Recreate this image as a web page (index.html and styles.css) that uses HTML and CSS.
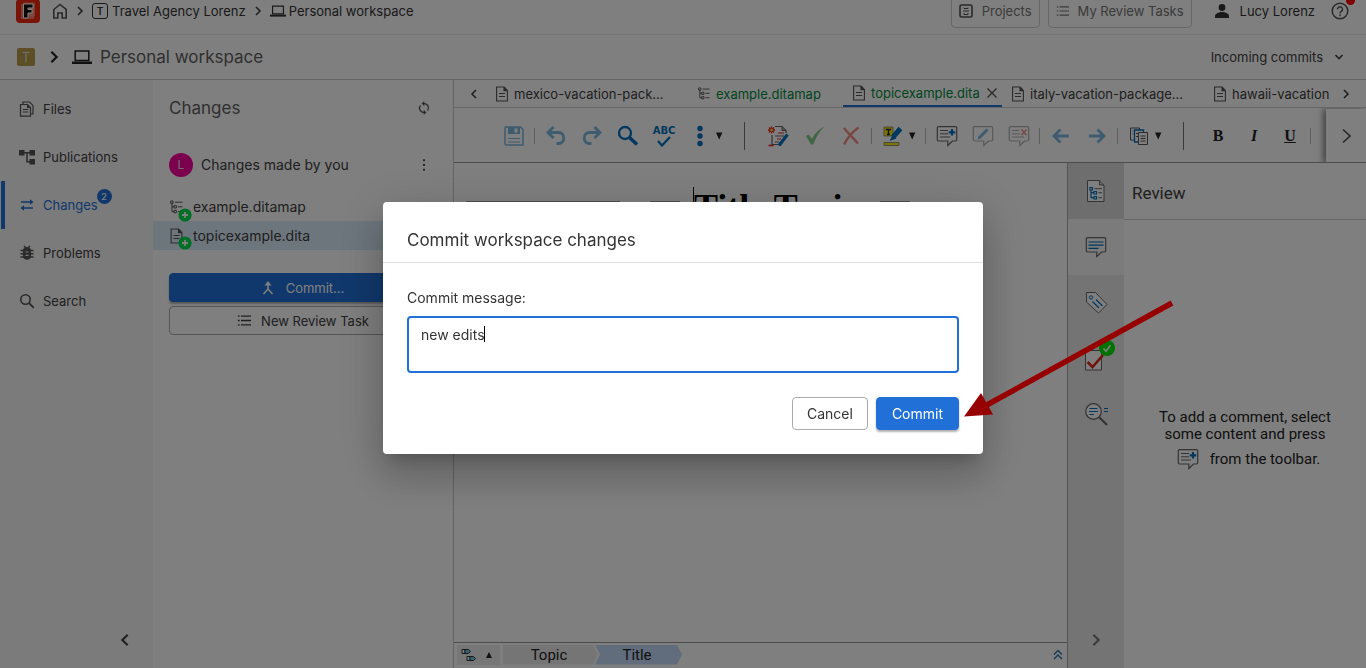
FILE: index.html
```html
<!DOCTYPE html>
<html lang="en">
<head>
<meta charset="utf-8">
<title>Personal workspace</title>
<link rel="stylesheet" href="styles.css">
</head>
<body>
<svg class="defs" aria-hidden="true">
  <symbol id="doc" viewBox="0 0 12 16"><path d="M.6 1h7.6l3.2 3.4V15H.6z M8 1v3.6h3.4" fill="none" stroke="currentColor" stroke-width="1.1"/><path d="M8 1l3.4 3.6H8z" fill="currentColor"/><path d="M3 7.500h6M3 10.500h6" stroke="currentColor"/></symbol>
  <symbol id="map" viewBox="0 0 13 14"><path d="M.7 1h2.4v2.4H.7zM4 5.6h2.4V8H4zM4 10.4h2.4v2.4H4zM2 3.5v8.2h2M2 6.8h2M5 2.2h7.5M8 6.8h4.5M8 11.6h4.5" fill="none" stroke="currentColor" stroke-width="1"/></symbol>
  <symbol id="right" viewBox="0 0 12 12"><path d="M4 2l4 4-4 4" fill="none" stroke="currentColor" stroke-width="1.6"/></symbol>
  <symbol id="left" viewBox="0 0 12 12"><path d="M8 2L4 6l4 4" fill="none" stroke="currentColor" stroke-width="1.6"/></symbol>
  <symbol id="laptop" viewBox="0 0 20 14"><path d="M3.2 1h13.6v9.6H3.2z" fill="none" stroke="currentColor" stroke-width="1.5"/><path d="M0 11.5h20V14H0z" fill="currentColor"/></symbol>
  <symbol id="list" viewBox="0 0 16 14"><path d="M4.5 2H16M4.5 7H16M4.5 12H16M1 2h2M1 7h2M1 12h2" stroke="currentColor" stroke-width="1.5"/></symbol>
  <symbol id="caret" viewBox="0 0 10 10"><path d="M2 1.5h6.400L5.200 8.500z" fill="#222"/></symbol>
  <symbol id="bubble" viewBox="0 0 24 24"><path d="M3.5 2.6h17a1.2 1.2 0 0 1 1.2 1.2v12a1.2 1.2 0 0 1-1.2 1.2h-3L12.8 21.5V17H3.5a1.2 1.2 0 0 1-1.2-1.2v-12a1.2 1.2 0 0 1 1.2-1.2z" fill="none" stroke="#666" stroke-width="1.2"/></symbol>
  <symbol id="addcomment" viewBox="0 0 24 24"><use href="#bubble"/><path d="M5 6.5h8M5 9.8h8M5 13h10" stroke="#666"/><path d="M17 5v6.6M13.7 8.3h6.6" stroke="#0070c0" stroke-width="2.2"/></symbol>
  <symbol id="plus" viewBox="0 0 14 14"><circle cx="7" cy="7" r="6.6" fill="#00e04c"/><path d="M7 4v6M4 7h6" stroke="#fff" stroke-width="1.8"/></symbol>
</svg>

<header class="topbar">
  <svg class="logo" viewBox="0 0 24 24"><rect width="24" height="24" rx="4" fill="#f32a10"/><path d="M5 5h13v15H5z" fill="#ff7a60"/><path d="M7 3.500h12v14H7z" fill="#ffab95" opacity=".6"/><path d="M7.500 5H17v4h-5v1.500h4v3.500h-4v5H7.500z" fill="#111" stroke="#fff"/></svg>
  <nav class="crumbs">
    <a href="#" aria-label="Home"><svg width="16" height="16" viewBox="0 0 16 16"><path d="M1.800 6.500L8 1.500l6.200 5V15h-4v-5H5.800v5h-4z" fill="none" stroke="#555" stroke-width="1.600"/></svg></a>
    <svg class="ic12"><use href="#right"/></svg>
    <a href="#"><span class="org">T</span>Travel Agency Lorenz</a>
    <svg class="ic12"><use href="#right"/></svg>
    <a href="#"><svg width="16" height="12"><use href="#laptop"/></svg>Personal workspace</a>
  </nav>
  <button class="outlined"><svg width="14" height="14" viewBox="0 0 14 14"><rect x="1" y="1" width="12" height="12" rx="1.500" fill="none" stroke="#555" stroke-width="1.600"/><path d="M4 7h6M5 3.500v1h4v-1M5 9v1.500h4V9" fill="none" stroke="#555"/></svg>Projects</button>
  <button class="outlined"><svg width="13" height="12"><use href="#list"/></svg>My Review Tasks</button>
  <button class="plain user"><svg width="14" height="14" viewBox="0 0 14 14"><circle cx="7" cy="3.500" r="3.400" fill="#333"/><path d="M0 14v-2c0-2.400 4-4 7-4s7 1.600 7 4v2z" fill="#333"/></svg>Lucy Lorenz</button>
  <button class="plain help" aria-label="Help"><svg width="18" height="18" viewBox="0 0 18 18"><circle cx="9" cy="9" r="7.800" fill="none" stroke="#555" stroke-width="1.500"/><path d="M6.500 7.300a2.500 2.500 0 1 1 3.800 2.100c-.9.500-1.300.9-1.300 2M9 12.600v1.600" fill="none" stroke="#555" stroke-width="1.500"/></svg><span class="dot"></span></button>
</header>

<div class="titlebar">
  <span class="tile">T</span>
  <svg width="16" height="16"><use href="#right"/></svg>
  <svg width="20" height="14"><use href="#laptop"/></svg>
  <h1>Personal workspace</h1>
  <button class="plain incoming">Incoming commits <svg width="12" height="12" viewBox="0 0 12 12"><path d="M2.500 4L6 7.500 9.500 4" fill="none" stroke="currentColor" stroke-width="1.600"/></svg></button>
</div>

<main class="main">
  <nav class="side">
    <a href="#"><svg viewBox="0 0 16 16"><path d="M1.500 3.500h7l3 3v8.700h-10z" fill="none" stroke="#555" stroke-width="1.200"/><path d="M4 3V1h6.500L14 4.400V13h-2M3.700 8.500h5.600M3.700 11h5.600" fill="none" stroke="#555" stroke-width="1.200"/><path d="M8 3.500v3.400h3.500z" fill="#555"/></svg>Files</a>
    <a href="#"><svg viewBox="0 0 16 16"><path d="M0 1h5.500v5.500H0zM10.500 1H16v5.500h-5.500zM10.500 10H16v5.500h-5.500z" fill="#555"/><path d="M5 3.700h6M8 3.700v9h3" fill="none" stroke="#555" stroke-width="1.500"/></svg>Publications</a>
    <a href="#" class="on"><svg viewBox="0 0 16 16"><path d="M2 5h10M4 11h10" stroke="#2170d8" stroke-width="1.400"/><path d="M11 2.300l3.500 2.700L11 7.700zM5 8.300L1.500 11 5 13.700z" fill="#2170d8"/></svg><span class="badged">Changes<b>2</b></span></a>
    <a href="#"><svg viewBox="0 0 16 16"><path d="M4 5c.5-4 7.500-4 8 0v6c0 5-8 5-8 0z" fill="#555"/><path d="M1.500 5.500h13M1.500 8.700h13M1.500 12h13M5 1l2 2M11 1L9 3" stroke="#555" stroke-width="1.500"/><path d="M6.500 7h3M6.500 10.300h3" stroke="#f5f5f5" stroke-width="1.200"/></svg>Problems</a>
    <a href="#"><svg viewBox="0 0 16 16"><circle cx="6.500" cy="6.500" r="4.700" fill="none" stroke="#555" stroke-width="1.600"/><path d="M10 10l4.800 4.800" stroke="#555" stroke-width="1.800"/></svg>Search</a>
    <button class="plain collapse" aria-label="Collapse"><svg width="16" height="16"><use href="#left"/></svg></button>
  </nav>

  <section class="changes">
    <div class="changes-head"><h2>Changes</h2><button class="plain" aria-label="Refresh"><svg width="14" height="14" viewBox="0 0 14 14"><path d="M7 2.600c4 0 5.600 4.200 3.600 7M7 11.400c-4 0-5.600-4.200-3.600-7" fill="none" stroke="#555" stroke-width="1.300"/><path d="M7.300 0v5.200L4.600 2.600zM6.700 14V8.800l2.700 2.600z" fill="#555"/></svg></button></div>
    <div class="owner"><span class="avatar">L</span>Changes made by you<button class="plain" aria-label="More"><svg width="14" height="14" viewBox="0 0 14 14"><path d="M6 1.200h2v2H6zM6 6h2v2H6zM6 10.800h2v2H6z" fill="#555"/></svg></button></div>
    <ul class="files">
      <li><span class="ficon"><svg width="13" height="14"><use href="#map"/></svg><svg class="plus"><use href="#plus"/></svg></span>example.ditamap</li>
      <li class="sel"><span class="ficon"><svg width="13" height="16"><use href="#doc"/></svg><svg class="plus"><use href="#plus"/></svg></span>topicexample.dita</li>
    </ul>
    <div class="acts">
      <button class="primary wide"><svg width="12" height="14" viewBox="0 0 12 14"><path d="M6 2v6l-4.500 5M6 8l4.500 5" fill="none" stroke="#fff" stroke-width="1.500"/><path d="M2.500 4.500L6 0l3.500 4.500z" fill="#fff"/></svg>Commit...</button>
      <button class="secondary wide"><svg width="14" height="13"><use href="#list"/></svg>New Review Task</button>
    </div>
  </section>

  <section class="editor">
    <div class="tabs">
      <button class="plain tabnav" aria-label="Previous tabs"><svg class="ic12"><use href="#left"/></svg></button>
      <div class="tablist">
        <button class="tab long"><svg width="12" height="16"><use href="#doc"/></svg>mexico-vacation-pack...</button>
        <button class="tab green"><svg width="12" height="13"><use href="#map"/></svg>example.ditamap</button>
        <button class="tab green active"><svg width="12" height="16"><use href="#doc"/></svg>topicexample.dita<svg width="12" height="12" viewBox="0 0 12 12"><path d="M1.500 1.500l9 9M10.500 1.500l-9 9" stroke="#555" stroke-width="1.300"/></svg></button>
        <button class="tab long"><svg width="12" height="16"><use href="#doc"/></svg>italy-vacation-package...</button>
        <button class="tab last"><svg width="12" height="16"><use href="#doc"/></svg>hawaii-vacation</button>
      </div>
      <button class="plain tabnav" aria-label="Next tabs"><svg class="ic12"><use href="#right"/></svg></button>
    </div>

    <div class="toolbar">
      <button class="tool dim" aria-label="Save"><svg viewBox="0 0 24 24"><path d="M4 3h14.500L21 5.500V21H4a1 1 0 0 1-1-1V4a1 1 0 0 1 1-1z" fill="none" stroke="#0070c0" stroke-width="1.500"/><path d="M6 3h12v7H6z" fill="#0070c0"/><path d="M12.500 4.500h3v4h-3z" fill="#fff"/><path d="M6 14.500h12M6 18h12" stroke="#0070c0"/></svg></button>
      <i class="sep"></i>
      <button class="tool dim" aria-label="Undo"><svg viewBox="0 0 24 24"><path d="M5 8.500h9.500c7 0 7 11 0 11h-2" fill="none" stroke="#0070c0" stroke-width="2.800"/><path d="M9.500 3L4 8.500l5.500 5.500" fill="none" stroke="#0070c0" stroke-width="2.800"/></svg></button>
      <button class="tool dim" aria-label="Redo"><svg viewBox="0 0 24 24"><path d="M19 8.500H9.500c-7 0-7 11 0 11h2" fill="none" stroke="#0070c0" stroke-width="2.800"/><path d="M14.500 3L20 8.500 14.500 14" fill="none" stroke="#0070c0" stroke-width="2.800"/></svg></button>
      <button class="tool" aria-label="Find"><svg viewBox="0 0 24 24"><circle cx="9" cy="9" r="6" fill="none" stroke="#0070c0" stroke-width="2.300"/><path d="M13.500 13.500l7.500 7" stroke="#0070c0" stroke-width="3.500"/></svg></button>
      <button class="tool abc" aria-label="Spell check">ABC<svg viewBox="0 0 14 11"><path d="M1 5l4 4.500L13 1" fill="none" stroke="#0070c0" stroke-width="2.200"/></svg></button>
      <button class="tool drop" aria-label="More actions"><svg viewBox="0 0 24 24"><circle cx="12" cy="4.500" r="2.700" fill="#0070c0"/><circle cx="12" cy="12" r="2.700" fill="#0070c0"/><circle cx="12" cy="19.500" r="2.700" fill="#0070c0"/></svg><svg class="caret"><use href="#caret"/></svg></button>
      <i class="sep big"></i>
      <button class="tool" aria-label="Track changes"><svg viewBox="0 0 24 24"><path d="M8 2.500h7l4 4V9M5 11v9.500h8" fill="none" stroke="#666" stroke-width="1.200"/><path d="M15 2.500v4h4" fill="#aaa" stroke="#666"/><path d="M11 9h6M10 15h4" stroke="#e22" stroke-width="1.200"/><path d="M8 12h9M8 18h4" stroke="#666"/><path d="M4.500 2.500v7M1 6h7M2 3.500l5 5M7 3.500l-5 5" stroke="#e22" stroke-width="1.300"/><circle cx="4.500" cy="6" r="1.500" fill="#fc3"/><path d="M1.500 21.500h5" stroke="#e22" stroke-width="1.600"/><path d="M12 21.500l8.500-11" stroke="#0070c0" stroke-width="3.200"/></svg></button>
      <button class="tool dim" aria-label="Accept"><svg viewBox="0 0 24 24"><path d="M3 12l2.500-1.500L9 15C12 9 16 5 21.500 2.500 16 8 13 13 10.500 20.500H8z" fill="#0a9a1c"/></svg></button>
      <button class="tool dim" aria-label="Reject"><svg viewBox="0 0 24 24"><path d="M5 4c4 5 9 10 14 15.500M19.500 3.500C13 8 9 13 5 20.500" fill="none" stroke="#e8230f" stroke-width="2.500"/></svg></button>
      <i class="sep"></i>
      <button class="tool drop" aria-label="Highlight"><svg viewBox="0 0 24 24"><path d="M3 3h9v9H3z" fill="#f4ec00" stroke="#777" stroke-width=".8"/><path d="M4.800 5.500h5.400M7.500 5v5.500M6 10.500h3" stroke="#222" stroke-width="1.500"/><path d="M3 18.500h15v3H3z" fill="#f4ec00" stroke="#777" stroke-width=".8"/><path d="M8.500 17l3-6 4 3.500z" fill="#0070c0"/><path d="M12 13l7.500-8.500" stroke="#0070c0" stroke-width="5"/></svg><svg class="caret"><use href="#caret"/></svg></button>
      <i class="sep"></i>
      <button class="tool" aria-label="Add comment"><svg><use href="#addcomment"/></svg></button>
      <button class="tool dim" aria-label="Edit comment"><svg viewBox="0 0 24 24"><use href="#bubble"/><path d="M8 14l8.500-8.500" stroke="#0070c0" stroke-width="3"/><path d="M6.500 15.500l3-1-2-2z" fill="#0070c0"/></svg></button>
      <button class="tool dim" aria-label="Delete comment"><svg viewBox="0 0 24 24"><use href="#bubble"/><path d="M5 6.500h7M5 9.800h8M5 13h12" stroke="#666"/><path d="M14.500 5.500l5 5.500M19.500 5.500l-5 5.500" stroke="#e8230f" stroke-width="1.500"/></svg></button>
      <i class="sep"></i>
      <button class="tool dim" aria-label="Back"><svg viewBox="0 0 24 24"><path d="M20 12H6M11.500 5.500L5 12l6.500 6.500" fill="none" stroke="#0070c0" stroke-width="2.800"/></svg></button>
      <button class="tool dim" aria-label="Forward"><svg viewBox="0 0 24 24"><path d="M4 12h14M12.500 5.500L19 12l-6.500 6.500" fill="none" stroke="#0070c0" stroke-width="2.800"/></svg></button>
      <i class="sep"></i>
      <button class="tool drop" aria-label="Copy"><svg viewBox="0 0 24 24"><path d="M3.500 4h9v12h-9z" fill="#fff" stroke="#555"/><path d="M7.500 6h9v12h-9z" fill="#fff" stroke="#0070c0" stroke-width="1.300"/><path d="M11.500 8.500h9v12h-9z" fill="#fff" stroke="#555"/><path d="M13.500 12h5M13.500 14.500h5M13.500 17h5M5.500 7h1M5.500 10h1M9 9.500h2M9 12.500h2" stroke="#555"/></svg><svg class="caret"><use href="#caret"/></svg></button>
      <i class="sep big"></i>
      <button class="tool fmt"><b>B</b></button>
      <button class="tool fmt"><em>I</em></button>
      <button class="tool fmt"><u>U</u></button>
      <i class="sep"></i>
      <button class="more" aria-label="More tools"><svg width="20" height="20" viewBox="0 0 20 20"><path d="M7 3.500l7 6.500-7 6.500" fill="none" stroke="#555" stroke-width="1.700"/></svg></button>
    </div>

    <div class="workarea">
      <div class="docpane">
        <div class="doc"><span class="rule first"></span><span class="rule"></span><h3>Title Topic</h3><span class="rule"></span></div>
        <div class="path">
          <button class="pathbtn" aria-label="Path options"><svg width="16" height="14" viewBox="0 0 16 14"><path d="M1 1.500h3v4H1zM6 8.500h3v4H6z" fill="#fff" stroke="#333"/><path d="M4 1.500h3.500l2 2-2 2H4zM9 8.500h3.500l2 2-2 2H9z" fill="#6ac5ee" stroke="#333"/></svg><svg width="8" height="8" viewBox="0 0 8 8"><path d="M1 7h6L4 1z" fill="#222"/></svg></button>
          <a href="#" class="step">Topic</a>
          <a href="#" class="step cur">Title</a>
          <button class="plain up" aria-label="Expand"><svg width="10" height="11" viewBox="0 0 10 11"><path d="M1 5.500L5 1.500l4 4M1 10l4-4 4 4" fill="none" stroke="#2477ae" stroke-width="1.400"/></svg></button>
        </div>
      </div>
      <div class="strip">
        <button class="on" aria-label="Outline"><svg viewBox="0 0 24 24"><path d="M3.500 1.500h12l4.500 4.500v16.500H3.500z" fill="#fff" stroke="#666"/><path d="M15.500 1.500V6H20" fill="#ccc" stroke="#666"/><path d="M6 8.500h2.500V11H6zM10 12.500h2.500V15H10zM10 17.500h2.500V20H10zM7 11v7.700h3M7 13.700h3" fill="none" stroke="#0070c0" stroke-width="1.200"/><path d="M10.500 9.700H18M14.500 13.700H18M14.500 18.700H18" stroke="#666"/></svg></button>
        <button class="review" aria-label="Review"><svg viewBox="0 0 24 24"><use href="#bubble"/><path d="M4.500 7h15M4.500 10.200h15M4.500 13.400h10" stroke="#0070c0" stroke-width="1.200"/></svg></button>
        <button aria-label="Attributes"><svg viewBox="0 0 24 24"><path d="M2.500 1.500h9L23 13.500 14.500 22 2.500 11z" fill="#fff" stroke="#666"/><circle cx="7" cy="6.500" r="1.700" fill="none" stroke="#0070c0"/><path d="M12 8.500l6.500 6.500M8.500 10.500l6.500 6.500" stroke="#0070c0" stroke-width="1.300"/></svg></button>
        <button aria-label="Validation"><svg viewBox="0 0 24 24"><path d="M1.500 3.500h16V23h-16z" fill="#fff" stroke="#666"/><path d="M3.500 15l5 5L19 8" fill="none" stroke="#e0261a" stroke-width="2.600"/></svg><svg class="okbadge" viewBox="0 0 16 16"><circle cx="8" cy="8" r="8" fill="#00e400"/><path d="M4.500 8.500l2.500 2.700 4.500-6" fill="none" stroke="#fff" stroke-width="1.600"/></svg></button>
        <button aria-label="Find in document"><svg viewBox="0 0 24 24"><circle cx="9.500" cy="8.500" r="7.800" fill="#fff" stroke="#666" stroke-width="1.200"/><path d="M15 14l8 8" stroke="#666" stroke-width="2.200"/><path d="M5.500 5.500h8M5 8.500h9M5.500 11.500h4.500M20 5.500h4M20 8.500h4" stroke="#0070c0" stroke-width="1.200"/></svg></button>
        <button class="collapse2" aria-label="Collapse panel"><svg width="16" height="16"><use href="#right"/></svg></button>
      </div>
      <aside class="reviewpane">
        <h2>Review</h2>
        <p>To add a comment, select<br>some content and press<span class="hint"><svg width="24" height="24"><use href="#addcomment"/></svg>from the toolbar.</span></p>
      </aside>
    </div>
  </section>
</main>

<div class="overlay">
  <form class="dialog" role="dialog" aria-labelledby="dlg">
    <h2 id="dlg">Commit workspace changes</h2>
    <div class="dialog-body">
      <label for="msg">Commit message:</label>
      <div class="field"><textarea id="msg" rows="2">new edits</textarea><span class="cursor"></span></div>
      <div class="dialog-actions">
        <button type="button" class="secondary">Cancel</button>
        <button type="button" class="primary">Commit</button>
        <svg class="arrow" viewBox="0 0 212 122"><path d="M22 110L209 7" stroke="#960000" stroke-width="5.500"/><path d="M1 120.500L18 97l12 21.500z" fill="#960000"/></svg>
      </div>
    </div>
  </form>
</div>
</body>
</html>
```
FILE: styles.css
```css
* { box-sizing: border-box; }
body {
  margin: 0;
  height: 100vh;
  display: flex;
  flex-direction: column;
  overflow: hidden;
  background: #fff;
  color: #404040;
  font: 13px/20px Inter, "Liberation Sans", sans-serif;
}
.defs { position: absolute; width: 0; height: 0; }
h1, h2, h3, p, ul { margin: 0; padding: 0; font-weight: 400; }
svg { flex: none; display: block; }
a { color: inherit; text-decoration: none; }
button { font: inherit; color: inherit; cursor: pointer; }
.ic12 { width: 12px; height: 12px; }
.plain { display: flex; align-items: center; border: 0; padding: 0; background: none; }

.topbar {
  flex: none;
  height: 35px;
  display: flex;
  align-items: center;
  padding: 0 17px 12px 16px;
  border-bottom: 1px solid #ececec;
}
.logo { width: 24px; height: 24px; }
.crumbs { display: flex; align-items: center; gap: 6px; margin: 0 auto 0 12px; }
.crumbs a { display: flex; align-items: center; gap: 4px; color: #333; }
.crumbs a:last-child { gap: 3px; }
.org {
  width: 16px; height: 16px;
  border: 1px solid #333; border-radius: 3px;
  font-size: 10px; line-height: 14px; font-weight: 600; text-align: center;
}
.outlined {
  display: flex; align-items: center; gap: 9px;
  height: 33px;
  margin-right: 8px; padding: 0 7px;
  border: 1px solid #ccc; border-radius: 4px;
  background: #fff; color: #757575;
}
.user { gap: 11px; margin: 0 16px 0 15px; color: #333; }
.help { position: relative; }
.dot { position: absolute; right: -6px; top: -6px; width: 9px; height: 9px; border-radius: 50%; background: #f00; }

.titlebar {
  flex: none;
  height: 45px;
  display: flex; align-items: center;
  padding: 0 21px 0 17px;
  border-bottom: 1px solid #c8c8c8;
}
.tile {
  width: 18px; height: 18px; margin-right: 11px;
  border-radius: 2px; background: #b89c4a; color: #ddd;
  line-height: 18px; text-align: center;
}
.titlebar > svg { margin-right: 10px; color: #222; }
.titlebar > svg + svg { margin-right: 8px; }
.titlebar h1 { font-size: 17px; line-height: 24px; color: #606060; }
.incoming { gap: 10px; margin-left: auto; }

.main { flex: 1; min-height: 0; display: flex; }
.side {
  flex: none; width: 153px;
  display: flex; flex-direction: column;
  padding-top: 5px; background: #f7f7f7;
}
.side a {
  display: flex; align-items: center; gap: 8px;
  height: 48px; margin-left: 1px; padding-left: 18px;
}
.side a svg { width: 16px; height: 16px; }
.side .on { border-left: 4px solid #2170d8; padding-left: 14px; color: #2170d8; }
.badged { position: relative; }
.badged b {
  position: absolute; right: -14px; top: -6px;
  width: 15px; height: 15px; border-radius: 50%;
  background: #2170d8; color: #fff;
  font-size: 9px; line-height: 15px; font-weight: 500; text-align: center;
}
.collapse { margin: auto 20px 20px auto; }

.changes { flex: none; width: 301px; border-right: 1px solid #c8c8c8; }
.changes-head, .owner { display: flex; align-items: center; padding: 0 22px 0 16px; }
.changes-head { height: 56px; }
.changes-head h2 { font-size: 17px; color: #606060; }
.changes-head button, .owner button { margin-left: auto; }
.owner { height: 57px; gap: 8px; font-size: 14px; }
.avatar {
  width: 24px; height: 24px; border-radius: 50%;
  background: #f7009a; color: #ddd;
  font-size: 12px; line-height: 24px; text-align: center;
}
.files { list-style: none; font-size: 14px; }
.files li { display: flex; align-items: center; height: 28px; padding-left: 17px; }
.files .sel { background: #dcecfa; height: 29px; }
.ficon { position: relative; width: 23px; color: #555; }
.plus { position: absolute; left: 8px; top: 8px; width: 14px; height: 14px; }
.acts { display: flex; flex-direction: column; gap: 4px; padding: 23px 16px; }
.primary, .secondary {
  display: flex; align-items: center; justify-content: center;
  height: 33px; padding: 0 15px;
  border-radius: 4px; font-size: 14px;
}
.primary { border: 1px solid #2170d8; background: #2170d8; color: #fff; box-shadow: 0 2px 2px rgba(0, 0, 0, .3); }
.secondary { padding: 0 14px; border: 1px solid #aaa; background: #fff; }
.wide { height: 29px; gap: 10px; font-size: 13px; }
.wide.primary { gap: 12px; }

.editor { flex: 1; min-width: 0; display: flex; flex-direction: column; }
.tabs { flex: none; display: flex; height: 28px; border-bottom: 1px solid #ccc; }
.tabnav { flex: none; width: 32px; padding-left: 14px; }
.tabnav:last-child { width: 34px; padding-left: 8px; }
.tablist { flex: 1; min-width: 0; display: flex; overflow: hidden; }
.tab {
  flex: none; width: 155px;
  display: flex; align-items: center; gap: 6px;
  padding: 0 10px; border: 0; background: none;
  white-space: nowrap;
}
.tab.long { width: 202px; }
.tab.last { flex: 1 0 auto; width: auto; padding-right: 0; }
.tab svg { color: #555; }
.tab.green { color: #008a3c; }
.tab.active { width: 159px; padding-right: 4px; border-bottom: 2px solid #2170d8; }

.toolbar {
  flex: none; display: flex; align-items: center;
  height: 55px; padding: 2px 0 0 42px;
  border-bottom: 1px solid #999; overflow: hidden;
}
.tool {
  flex: none; width: 36px; height: 36px;
  display: flex; align-items: center; justify-content: center;
  padding: 0; border: 0; background: none;
}
.tool svg { width: 24px; height: 24px; }
.tool.dim svg { opacity: .5; }
.tool.drop { width: 48px; gap: 2px; }
.tool .caret { width: 10px; height: 10px; }
.abc { flex-direction: column; color: #0070c0; font: bold 10px/10px "DejaVu Sans", sans-serif; }
.tool.abc svg { width: 14px; height: 11px; }
.sep { flex: none; width: 1px; height: 16px; margin: 0 3px 0 2px; background: #bbb; }
.sep.big { height: 28px; margin: 0 16px 0 14px; background: #777; }
.fmt { color: #222; font: bold 16px/20px "Liberation Serif", serif; }
.more {
  flex: none; width: 40px; height: 54px; margin-left: auto; padding: 0 10px;
  border: 0; background: #fff; box-shadow: -3px 0 6px rgba(60, 50, 60, .6);
}

.workarea { flex: 1; min-height: 0; display: flex; }
.docpane { flex: 1; min-width: 0; display: flex; flex-direction: column; border-right: 1px solid #aaa; }
.doc { flex: 1; display: flex; align-items: flex-start; padding: 24px 12px; }
.doc h3 {
  margin: 0 22px 0 13px; border-left: 1px solid #000;
  color: #000; font: bold 36px/40px "Liberation Serif", serif;
}
.rule { width: 30px; height: 2px; margin-top: 14px; background: #999; }
.rule.first { width: 154px; margin-right: 30px; }
.path { display: flex; align-items: center; height: 26px; padding: 0 4px 2px 3px; border-top: 1px solid #999; }
.pathbtn {
  display: flex; align-items: center; gap: 8px;
  width: 43px; height: 20px; margin-right: 3px; padding: 0 4px;
  border: 0; background: #eee;
}
.step {
  width: 95px; height: 20px; margin-right: -3px; padding-right: 3px;
  background: #ebebeb; color: #222;
  font: 400 15px/20px Roboto, sans-serif; text-align: center;
  clip-path: polygon(0 0, calc(100% - 5px) 0, 100% 50%, calc(100% - 5px) 100%, 0 100%);
}
.step.cur {
  width: 87px; margin: 0; background: #c3d9f8;
  clip-path: polygon(0 0, calc(100% - 5px) 0, 100% 50%, calc(100% - 5px) 100%, 0 100%, 5px 50%);
}
.up { margin-left: auto; }
.strip { flex: none; width: 56px; display: flex; flex-direction: column; background: #e9e9e9; }
.strip button {
  position: relative; height: 56px;
  display: flex; align-items: center; justify-content: center;
  padding: 0; border: 0; background: none;
}
.strip button svg { width: 24px; height: 24px; }
.strip .on { background: #dcdcdc; }
.strip .review { background: #f7f7f7; }
.strip .okbadge { position: absolute; left: 31px; top: 9px; width: 16px; height: 16px; }
.strip .collapse2 { margin-top: auto; color: #777; }
.strip .collapse2 svg { width: 16px; height: 16px; }
.reviewpane { flex: none; width: 242px; font-family: Roboto, sans-serif; display: flex; flex-direction: column; }
.reviewpane h2 { height: 57px; padding: 0 8px; border-bottom: 1px solid #ccc; font-size: 17px; line-height: 60px; }
.reviewpane p { margin: auto 0; padding-bottom: 8px; font-size: 15px; line-height: 17px; text-align: center; color: #222; }
.hint { display: flex; align-items: center; justify-content: center; gap: 10px; margin-top: 4px; padding-left: 6px; }

.overlay {
  position: fixed; inset: 0;
  display: flex; align-items: center; justify-content: center;
  padding-bottom: 12px; background: rgba(0, 0, 0, .5);
}
.dialog {
  width: 600px; background: #fff; color: #333; border-radius: 4px;
  box-shadow: 0 11px 15px -7px rgba(0, 0, 0, .2), 0 24px 38px 3px rgba(0, 0, 0, .14), 0 9px 46px 8px rgba(0, 0, 0, .12);
}
.dialog h2 { padding: 26px 24px 10px; border-bottom: 1px solid #e0e0e0; font-size: 17px; line-height: 24px; }
.dialog-body { padding: 25px 24px 24px; font-size: 14px; }
.dialog label { display: block; margin-bottom: 8px; }
.field { position: relative; display: flex; }
.cursor { position: absolute; left: 77px; top: 10px; width: 1px; height: 16px; background: #000; }
.dialog textarea {
  width: 100%; height: 57px; padding: 7px 12px;
  border: 2px solid #2170d8; border-radius: 4px; outline: none; resize: none;
  background: #fff; color: inherit; font: inherit;
}
.dialog-actions { position: relative; display: flex; justify-content: flex-end; gap: 8px; margin-top: 24px; }
.arrow { position: absolute; left: 100%; bottom: 12px; width: 212px; height: 122px; margin-left: 4px; pointer-events: none; }
```
